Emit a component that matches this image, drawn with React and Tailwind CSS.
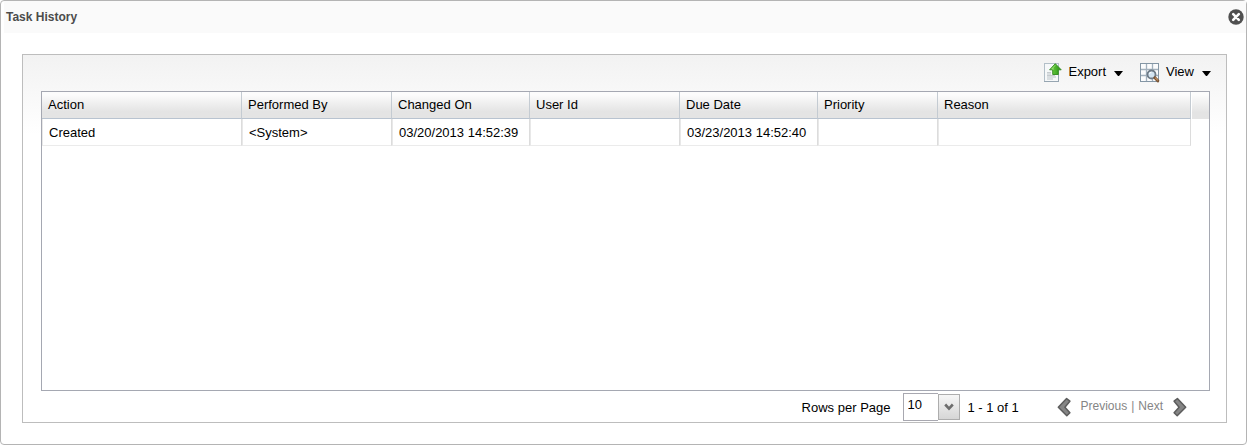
import React from "react";

const columns = [
  { name: "Action", width: "w-[200px]" },
  { name: "Performed By", width: "w-[150px]" },
  { name: "Changed On", width: "w-[138px]" },
  { name: "User Id", width: "w-[150px]" },
  { name: "Due Date", width: "w-[138px]" },
  { name: "Priority", width: "w-[120px]" },
  { name: "Reason", width: "" },
];

const rows = [["Created", "<System>", "03/20/2013 14:52:39", "", "03/23/2013 14:52:40", "", ""]];

function CloseIcon() {
  return (
    <svg className="block size-4" viewBox="0 0 16 16" aria-hidden="true">
      <circle cx="8" cy="8" r="7.7" fill="#505050" />
      <path d="M5.2 5.2l5.6 5.6M10.8 5.2l-5.6 5.6" stroke="#fff" strokeWidth="2.6" strokeLinecap="round" />
    </svg>
  );
}

function ExportIcon() {
  return (
    <svg className="block h-5 w-[18px]" viewBox="0 0 18 20" aria-hidden="true">
      <defs>
        <linearGradient id="arrow-green" x1="0" y1="0" x2="1" y2="0">
          <stop offset="0" stopColor="#7fd04f" />
          <stop offset="0.5" stopColor="#4cb52c" />
          <stop offset="1" stopColor="#2b8a17" />
        </linearGradient>
      </defs>
      <rect x="0.5" y="0.5" width="14" height="18" fill="#f6f8f9" stroke="#b3bfc8" />
      <path d="M14.5 10v9M0 18.5h15" stroke="#96a5b1" />
      <path d="M3 9.5h4M3 12.5h8" stroke="#c6cbcf" />
      <path d="M3 11h4M3 14h9M3 16h6" stroke="#d0d5d9" strokeWidth="1.4" />
      <path d="M11.3 0.7L17.2 6.8H14.3V11.5H8.7V6.8H5.6Z" fill="url(#arrow-green)" stroke="#2f8a1d" strokeWidth="0.9" strokeLinejoin="round" />
      <path d="M11.3 2.2L7.8 6H10" fill="none" stroke="#a5e27e" strokeWidth="0.8" />
    </svg>
  );
}

function ViewIcon() {
  return (
    <svg className="block size-5" viewBox="0 0 20 20" aria-hidden="true">
      <rect x="0.5" y="0.5" width="18" height="18" fill="#fbfcfd" stroke="#8496a5" />
      <path d="M6.5 1v17M12.5 1v17M1 6.5h17M1 12.5h17" stroke="#a3b1bd" strokeWidth="1.3" />
      <circle cx="11.5" cy="11.5" r="4" fill="#d3e4f1" stroke="#6d7a86" strokeWidth="1.8" />
      <path d="M9.5 11a2 2 0 0 1 2-1.8" fill="none" stroke="#fff" strokeWidth="1" />
      <path d="M14.9 14.8l2.9 3" stroke="#7b5534" strokeWidth="3" strokeLinecap="round" />
      <path d="M15.2 14.6l2.6 2.8" stroke="#c39263" strokeWidth="1.1" />
    </svg>
  );
}

function MenuArrow() {
  return (
    <svg className="block h-[5px] w-[9px]" viewBox="0 0 9 5" aria-hidden="true">
      <path d="M0 0h9L5 5H4Z" fill="#000" />
    </svg>
  );
}

function PageArrow({ next }) {
  return (
    <svg className={next ? "block h-5 w-3.5 -scale-x-100" : "block h-5 w-3.5"} viewBox="0 0 14 20" aria-hidden="true">
      <path d="M1.3 10.2L9.6 1.6L12.9 4.2L7.9 10.2L12.9 15.8L9.8 18.8Z" fill="#858585" stroke="#5c5c5c" strokeWidth="1.5" strokeLinejoin="round" />
    </svg>
  );
}

export default function App() {
  return (
    <div className="flex min-h-screen flex-col rounded-[4px] border border-[#b4b4b4] bg-white font-['Liberation_Sans',Arial,sans-serif] text-[13px] leading-4 text-black">
      <header className="ml-[3px] flex h-8 items-center justify-between bg-[#fafafa] pr-[2px] pl-[2px]">
        <h1 className="text-[12px] font-bold text-[#4c4c4c]">Task History</h1>
        <button type="button" aria-label="Close">
          <CloseIcon />
        </button>
      </header>

      <main className="mt-[21px] mr-[19px] mb-[21px] ml-[21px] flex grow flex-col border border-[#bdbdbd] bg-[linear-gradient(to_bottom,#f2f2f2,#ffffff_80px)] pr-[15px] pl-[18px]">
        <div className="flex h-9 items-center justify-end gap-[17px]">
          <button type="button" className="flex items-center gap-2">
            <span className="flex items-center gap-[6px]"><ExportIcon /><span className="pb-[2px]">Export</span></span>
            <MenuArrow />
          </button>
          <button type="button" className="flex items-center gap-2">
            <span className="flex items-center gap-[6px]"><ViewIcon /><span className="pb-[2px]">View</span></span>
            <MenuArrow />
          </button>
        </div>

        <div className="mr-px grow border border-[#a5a8b2] bg-white">
          <table className="w-full table-fixed border-separate border-spacing-0">
            <thead>
              <tr>
                {columns.map((column) => (
                  <th
                    key={column.name}
                    scope="col"
                    className={`${column.width} h-[27px] border-r border-b border-r-[#c4cbd2] border-b-[#b8c3d0] bg-linear-to-b from-[#fcfcfc] from-10% to-[#e4e4e4] to-75% pl-[6px] text-left font-normal`}
                  >
                    {column.name}
                  </th>
                ))}
                <td className="h-[27px] w-[18px] border-l border-l-white bg-linear-to-b from-[#fcfcfc] from-10% to-[#e4e4e4] to-75%" />
              </tr>
            </thead>
            <tbody>
              {rows.map((row, i) => (
                <tr key={i}>
                  {row.map((value, j) => (
                    <td key={j} className="h-[27px] border-r border-b border-l border-r-[#dcdcdc] border-b-[#ebebeb] border-l-[#e8e8e8] pt-[2px] pl-[6px]">
                      {value}
                    </td>
                  ))}
                  <td />
                </tr>
              ))}
            </tbody>
          </table>
        </div>

        <footer className="flex h-[31px] items-center justify-end pr-6">
          <label htmlFor="rows-per-page" className="mr-3 pt-[2px]">Rows per Page</label>
          <div className="grid h-7 w-[57px] grid-cols-[35px_22px]">
            <select
              id="rows-per-page"
              defaultValue="10"
              className="col-span-2 col-start-1 row-start-1 h-7 appearance-none border border-r-0 border-[#a8a8b0] bg-white pb-1 pl-1"
            >
              <option>10</option>
              <option>25</option>
              <option>50</option>
            </select>
            <span className="pointer-events-none col-start-2 row-start-1 flex flex-col bg-white pt-px pb-px">
              <span className="flex grow items-center justify-center border border-[#adadad] bg-linear-to-b from-[#f6f6f6] to-[#d6d6d6]">
                <svg className="block h-[8px] w-[10px]" viewBox="0 0 10 8" aria-hidden="true">
                  <path d="M1.2 1.5L5 5.6l3.8-4.1" fill="none" stroke="#6d6d6d" strokeWidth="2.6" />
                </svg>
              </span>
            </span>
          </div>
          <span className="ml-2 w-[89px] pt-[2px]">1 - 1 of 1</span>
          <nav aria-label="Pages" className="flex items-center text-[12px] text-[#858585]">
            <button type="button" className="flex items-center gap-[10px]">
              <PageArrow />
              <span className="pb-[2px]">Previous</span>
            </button>
            <span className="px-1 pb-[2px]">|</span>
            <button type="button" className="flex items-center gap-[10px]">
              <span className="pb-[2px]">Next</span>
              <PageArrow next />
            </button>
          </nav>
        </footer>
      </main>
    </div>
  );
}
